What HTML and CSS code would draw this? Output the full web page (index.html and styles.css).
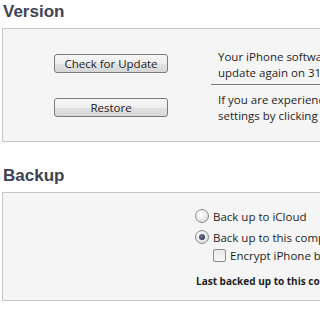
FILE: index.html
```html
<!DOCTYPE html>
<html>
<head>
<meta charset="utf-8">
<link rel="stylesheet" href="styles.css">
</head>
<body>
<div class="page">
  <h2 class="title">Version</h2>
  <div class="box version">
    <div class="row first">
      <div class="btn-col"><button class="btn">Check for Update</button></div>
      <div class="text sep">Your iPhone software is up to date. iTunes will automatically check for an<br>update again on 31/03/2013.</div>
    </div>
    <div class="row second">
      <div class="btn-col"><button class="btn">Restore</button></div>
      <div class="text">If you are experiencing problems with your iPhone, you can restore its original<br>settings by clicking Restore.</div>
    </div>
  </div>
  <h2 class="title backup-title">Backup</h2>
  <div class="box backup">
    <div class="options">
      <label class="opt"><span class="radio"></span>Back up to iCloud</label>
      <label class="opt"><span class="radio on"></span>Back up to this computer</label>
      <label class="opt sub"><span class="check"></span>Encrypt iPhone backup</label>
      <div class="last">Last backed up to this computer: Today 10:12</div>
    </div>
  </div>
</div>
</body>
</html>
```

FILE: styles.css
```css
html, body { margin: 0; padding: 0; background: #fff; overflow: hidden; }
.page { width: 600px; font-family: "Open Sans", "Liberation Sans", sans-serif; }
.title {
  margin: 0;
  padding: 2px 0 0 3px;
  height: 26px;
  font-family: "Liberation Sans", Arial, sans-serif;
  font-weight: bold;
  font-size: 17px;
  line-height: 20px;
  color: #3e4352;
}
.backup-title { margin-top: 22px; height: 26px; }
.box {
  margin-left: 2px;
  border: 1px solid #c6c6c6;
  background: #f5f5f5;
}
.version { height: 114px; padding-top: 20px; box-sizing: border-box; }
.row { display: flex; align-items: flex-start; }
.btn-col { width: 157px; padding-left: 51px; box-sizing: content-box; flex: none; }
.btn {
  display: block;
  width: 114px;
  height: 19px;
  padding: 0;
  border: 1px solid #7c7c7c;
  border-radius: 3px;
  background: linear-gradient(#f6f6f6 0%, #eeeeee 50%, #e2e2e2 51%, #d6d6d6 100%);
  font-family: "Open Sans", sans-serif;
  font-size: 11.5px;
  color: #222;
  line-height: 17px;
}
.first .btn { margin-top: 5px; }
.second .btn { margin-top: 13px; }
.text {
  flex: none;
  width: 400px;
  padding-left: 7px;
  font-size: 11.5px;
  line-height: 16px;
  color: #1e1e1e;
  white-space: nowrap;
}
.sep { padding-bottom: 3px; border-bottom: 1px solid #7a7a7a; }
.second .text { padding-top: 7px; }
.backup { height: 109px; box-sizing: border-box; padding: 13px 0 0 192px; }
.options { display: flex; flex-direction: column; }
.opt {
  display: flex;
  align-items: center;
  height: 20px;
  font-size: 11.5px;
  color: #1e1e1e;
  white-space: nowrap;
}
.opt + .opt { margin-top: 1px; }
.opt.sub { padding-left: 18px; height: 16px; margin-top: 0; }
.radio {
  width: 12px; height: 12px;
  border: 1px solid #8c8c8c;
  border-radius: 50%;
  background: radial-gradient(circle at 40% 35%, #ffffff 0%, #f0f0f0 40%, #cfcfcf 100%);
  margin-right: 4px;
  flex: none;
  position: relative;
}
.radio.on::after {
  content: "";
  position: absolute;
  left: 3px; top: 3px;
  width: 6px; height: 6px;
  border-radius: 50%;
  background: radial-gradient(circle at 40% 35%, #6b7a8f, #1c2a3e);
}
.check {
  width: 11px; height: 11px;
  border: 1px solid #8c8c8c;
  border-radius: 2px;
  background: linear-gradient(#e8e8e8, #f8f8f8);
  margin-right: 4px;
  flex: none;
}
.last {
  margin-top: 11px;
  padding-left: 1px;
  font-size: 10px;
  font-weight: bold;
  color: #1e1e1e;
  white-space: nowrap;
}
```
